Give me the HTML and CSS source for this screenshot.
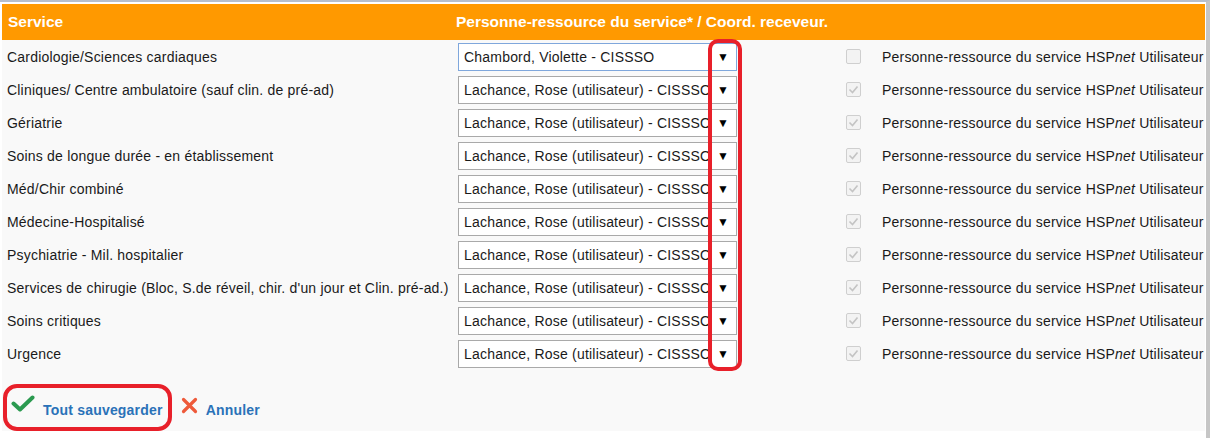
FILE: index.html
```html
<!DOCTYPE html>
<html lang="fr">
<head>
<meta charset="UTF-8" />
<meta name="viewport" content="width=device-width, initial-scale=1" />
<title>Personnes-ressources des services</title>
<link rel="stylesheet" href="styles.css">
</head>
<body>
  <div class="page">
    <div class="panel">
      <table class="services">
        <colgroup>
          <col class="c-service">
          <col class="c-select">
          <col class="c-check">
          <col class="c-label">
        </colgroup>
        <thead>
          <tr>
            <th>Service</th>
            <th colspan="3">Personne-ressource du service* / Coord. receveur.</th>
          </tr>
        </thead>
        <tbody>
          <tr>
            <td>Cardiologie/Sciences cardiaques</td>
            <td><div class="select focused"><span class="val">Chambord, Violette - CISSSO</span><span class="arrow">&#9660;</span></div></td>
            <td><span class="chk"></span></td>
            <td>Personne-ressource du service HSP<i>net</i> Utilisateur</td>
          </tr>
          <tr>
            <td>Cliniques/ Centre ambulatoire (sauf clin. de pré-ad)</td>
            <td><div class="select"><span class="val">Lachance, Rose (utilisateur) - CISSSO</span><span class="arrow">&#9660;</span></div></td>
            <td><span class="chk on"></span></td>
            <td>Personne-ressource du service HSP<i>net</i> Utilisateur</td>
          </tr>
          <tr>
            <td>Gériatrie</td>
            <td><div class="select"><span class="val">Lachance, Rose (utilisateur) - CISSSO</span><span class="arrow">&#9660;</span></div></td>
            <td><span class="chk on"></span></td>
            <td>Personne-ressource du service HSP<i>net</i> Utilisateur</td>
          </tr>
          <tr>
            <td>Soins de longue durée - en établissement</td>
            <td><div class="select"><span class="val">Lachance, Rose (utilisateur) - CISSSO</span><span class="arrow">&#9660;</span></div></td>
            <td><span class="chk on"></span></td>
            <td>Personne-ressource du service HSP<i>net</i> Utilisateur</td>
          </tr>
          <tr>
            <td>Méd/Chir combiné</td>
            <td><div class="select"><span class="val">Lachance, Rose (utilisateur) - CISSSO</span><span class="arrow">&#9660;</span></div></td>
            <td><span class="chk on"></span></td>
            <td>Personne-ressource du service HSP<i>net</i> Utilisateur</td>
          </tr>
          <tr>
            <td>Médecine-Hospitalisé</td>
            <td><div class="select"><span class="val">Lachance, Rose (utilisateur) - CISSSO</span><span class="arrow">&#9660;</span></div></td>
            <td><span class="chk on"></span></td>
            <td>Personne-ressource du service HSP<i>net</i> Utilisateur</td>
          </tr>
          <tr>
            <td>Psychiatrie - Mil. hospitalier</td>
            <td><div class="select"><span class="val">Lachance, Rose (utilisateur) - CISSSO</span><span class="arrow">&#9660;</span></div></td>
            <td><span class="chk on"></span></td>
            <td>Personne-ressource du service HSP<i>net</i> Utilisateur</td>
          </tr>
          <tr>
            <td>Services de chirugie (Bloc, S.de réveil, chir. d'un jour et Clin. pré-ad.)</td>
            <td><div class="select"><span class="val">Lachance, Rose (utilisateur) - CISSSO</span><span class="arrow">&#9660;</span></div></td>
            <td><span class="chk on"></span></td>
            <td>Personne-ressource du service HSP<i>net</i> Utilisateur</td>
          </tr>
          <tr>
            <td>Soins critiques</td>
            <td><div class="select"><span class="val">Lachance, Rose (utilisateur) - CISSSO</span><span class="arrow">&#9660;</span></div></td>
            <td><span class="chk on"></span></td>
            <td>Personne-ressource du service HSP<i>net</i> Utilisateur</td>
          </tr>
          <tr>
            <td>Urgence</td>
            <td><div class="select"><span class="val">Lachance, Rose (utilisateur) - CISSSO</span><span class="arrow">&#9660;</span></div></td>
            <td><span class="chk on"></span></td>
            <td>Personne-ressource du service HSP<i>net</i> Utilisateur</td>
          </tr>
        </tbody>
      </table>

      <div class="actions">
        <a class="action save">
          <svg width="24" height="17" viewBox="0 0 24 17"><path d="M2.5 8.5 L9 14.5 L21.5 2.5" fill="none" stroke="#2b9a50" stroke-width="4" stroke-linecap="round" stroke-linejoin="round"/></svg>
          Tout sauvegarder
        </a>
        <a class="action cancel">
          <svg width="17" height="17" viewBox="0 0 17 17"><path d="M2.5 2.5 L14.5 14.5 M14.5 2.5 L2.5 14.5" fill="none" stroke="#ee5a3a" stroke-width="3.2" stroke-linecap="round"/></svg>
          Annuler
        </a>
      </div>

      <!-- annotations -->
      <div class="mark mark-arrows"></div>
      <div class="mark mark-save"></div>
    </div>
  </div>
</body>
</html>
```

FILE: styles.css
```css
body {
  margin: 0;
  background: #fff;
  font-family: "Liberation Sans", Arial, sans-serif;
  font-size: 14px;
  letter-spacing: 0.2px;
  color: #1a1a1a;
}

.page {
  border-top: 2px solid #b7bfcc;
  border-right: 4px solid #c6c6c6;
  height: 438px;
  padding: 2px 1px 0 2px;
  box-sizing: border-box;
}

.panel {
  position: relative;
  background: #f9f9f9;
  height: 427px;
}

.services {
  width: 1203px;
  border-collapse: collapse;
  table-layout: fixed;
}

.c-service { width: 450px; }
.c-select { width: 384px; }
.c-check { width: 42px; }

.services th {
  background: #ff9900;
  color: #fff;
  font-size: 15.5px;
  font-weight: 700;
  letter-spacing: 0;
  text-align: left;
  height: 36px;
  padding: 0 0 0 6px;
  white-space: nowrap;
}
.services th + th { padding-left: 4px; }

.services td {
  height: 33px;
  padding: 0 0 0 5px;
  white-space: nowrap;
  vertical-align: middle;
}
.services td:nth-child(2) { padding-left: 6px; }
.services td:nth-child(3) { padding-left: 10px; }
.services td:nth-child(4) { padding-left: 4px; }

.select {
  display: flex;
  align-items: center;
  width: 279px;
  height: 28px;
  box-sizing: border-box;
  border: 1px solid #a9a9a9;
  background: #fff;
  margin-top: 1px;
}
.select.focused { border-color: #7fa7dc; }
.select .val {
  flex: 1;
  overflow: hidden;
  padding-left: 5px;
  white-space: nowrap;
}
.select .arrow {
  width: 26px;
  padding-left: 2px;
  text-align: center;
  font-size: 12px;
  color: #000;
}

.chk {
  display: block;
  width: 15px;
  height: 15px;
  box-sizing: border-box;
  border: 1px solid #cfcfcf;
  border-radius: 2px;
  background: #f3f3f3;
}
.chk.on {
  background: #f3f3f3 url("data:image/svg+xml,%3Csvg xmlns='http://www.w3.org/2000/svg' width='13' height='13'%3E%3Cpath d='M2.5 6.5 L5.5 9.5 L10.5 3.5' fill='none' stroke='%23c4c4c4' stroke-width='1.6'/%3E%3C/svg%3E") center no-repeat;
}

.actions {
  display: flex;
  align-items: center;
  gap: 10px;
  padding: 32px 0 0 9px;
}
.action {
  display: flex;
  align-items: center;
  gap: 8px;
  color: #2a72b8;
  font-weight: 700;
  font-size: 14px;
  cursor: pointer;
}
.action.save svg { margin-top: -14px; }
.action.cancel svg { margin-top: -10px; }
.action.save { margin-right: 8px; }

.mark {
  position: absolute;
  border: 4px solid #e8202a;
  border-radius: 10px;
}
.mark-arrows {
  left: 706px;
  top: 35px;
  width: 26px;
  height: 324px;
}
.mark-save {
  left: 1px;
  top: 380px;
  width: 161px;
  height: 39px;
  border-radius: 14px;
}
```
